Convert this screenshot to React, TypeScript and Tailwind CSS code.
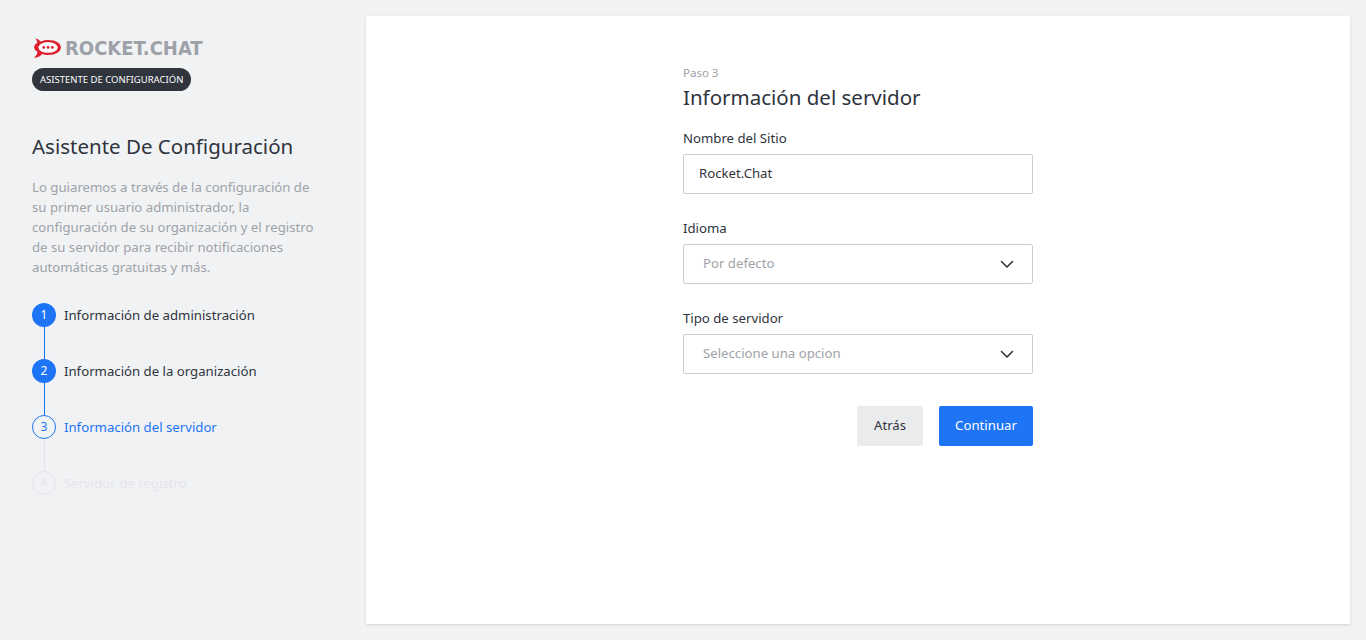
import React from "react";

const Chevron = () => (
  <svg width="16" height="16" viewBox="0 0 16 16" fill="none" stroke="#2f343d" strokeWidth="1.6" strokeLinecap="round" strokeLinejoin="round"><path d="M2.5 5.5 8 11l5.5-5.5" /></svg>
);

export default function App() {
  const steps = [
    { n: 1, t: "Información de administración", s: "done" },
    { n: 2, t: "Información de la organización", s: "done" },
    { n: 3, t: "Información del servidor", s: "cur" },
    { n: 4, t: "Servidor de registro", s: "todo" },
  ];
  return (
    <div className="w-[1366px] h-[640px] bg-[#f1f2f4] flex" style={{ fontFamily: '"Noto Sans", sans-serif' }}>
      <div className="w-[366px] shrink-0 pl-[32px] pr-[40px] pt-[35px]">
        <div className="flex items-center gap-[3px] h-[26px]">
          <svg width="30" height="24" viewBox="0 0 28 22">
            <path d="M3 2 C6 3 7 4 8 5 C10 4 12 3.5 15 3.5 C22 3.5 27 6.5 27 10.5 C27 14.5 22 17.5 15 17.5 C13 17.5 11 17 9.5 16.5 C8 18.5 5 20 2 20 C4 18 5 16.5 5 14.5 C3 13 2 12 2 10.5 C2 8.5 3 7 5 6 C4.5 4.5 4 3 3 2 Z" fill="#e01f2e" />
            <ellipse cx="15" cy="10.5" rx="9" ry="5" fill="#fff" />
            <circle cx="11" cy="10.5" r="1.3" fill="#e01f2e" /><circle cx="15" cy="10.5" r="1.3" fill="#e01f2e" /><circle cx="19" cy="10.5" r="1.3" fill="#e01f2e" />
          </svg>
          <span className="text-[20px] font-bold text-[#9ea2a8]" style={{ fontFamily: '"Liberation Sans Narrow", "DejaVu Sans Condensed", sans-serif' }}>ROCKET.CHAT</span>
        </div>
        <div className="mt-[7px] inline-block bg-[#2f343d] text-white text-[9.5px] rounded-full px-[8px] py-[4px] leading-[15px]">ASISTENTE DE CONFIGURACIÓN</div>
        <h1 className="mt-[40px] text-[20.5px] text-[#2f343d] leading-[30px]">Asistente De Configuración</h1>
        <p className="mt-[16px] text-[13.2px] leading-[20px] text-[#9ea2a8]">Lo guiaremos a través de la configuración de su primer usuario administrador, la configuración de su organización y el registro de su servidor para recibir notificaciones automáticas gratuitas y más.</p>
        <div className="mt-[26px] flex flex-col">
          {steps.map((st, i) => (
            <div key={st.n} className="flex gap-[8px]">
              <div className="flex flex-col items-center w-[24px]">
                <div className={
                  st.s === "done" ? "w-[24px] h-[24px] rounded-full bg-[#1d74f5] text-white text-[12px] flex items-center justify-center" :
                  st.s === "cur" ? "w-[24px] h-[24px] rounded-full border border-[#1d74f5] text-[#1d74f5] text-[12px] flex items-center justify-center" :
                  "w-[24px] h-[24px] rounded-full border border-[#e4e6e9] text-[#e4e6e9] text-[12px] flex items-center justify-center"}>{st.n}</div>
                {i < 3 && <div className={`w-px h-[32px] ${st.s === "done" ? "bg-[#1d74f5]" : "bg-[#e4e6e9]"}`} />}
              </div>
              <div className={`text-[13.2px] leading-[24px] ${st.s === "done" ? "text-[#2f343d]" : st.s === "cur" ? "text-[#1d74f5]" : "text-[#e4e6e9]"}`}>{st.t}</div>
            </div>
          ))}
        </div>
      </div>
      <div className="mt-[16px] mb-[16px] mr-[16px] flex-1 bg-white shadow-sm flex justify-center">
        <div className="w-[350px] pt-[50px]">
          <div className="text-[11.5px] text-[#9ea2a8] leading-[14px]">Paso 3</div>
          <h2 className="text-[20.5px] text-[#2f343d] leading-[30px] mt-[2px]">Información del servidor</h2>
          <label className="block mt-[16px] text-[13.2px] text-[#2f343d] leading-[20px]">Nombre del Sitio</label>
          <div className="mt-[6px] h-[40px] border border-[#cbced1] rounded-[2px] px-[15px] flex items-center text-[13.2px] text-[#2f343d]">Rocket.Chat</div>
          <label className="block mt-[24px] text-[13.2px] text-[#2f343d] leading-[20px]">Idioma</label>
          <div className="mt-[6px] h-[40px] border border-[#cbced1] rounded-[2px] pl-[19px] pr-[17px] flex items-center justify-between text-[13.2px] text-[#9ea2a8]">Por defecto<Chevron /></div>
          <label className="block mt-[24px] text-[13.2px] text-[#2f343d] leading-[20px]">Tipo de servidor</label>
          <div className="mt-[6px] h-[40px] border border-[#cbced1] rounded-[2px] pl-[19px] pr-[17px] flex items-center justify-between text-[13.2px] text-[#9ea2a8]">Seleccione una opcion<Chevron /></div>
          <div className="mt-[32px] flex justify-end gap-[16px]">
            <button className="h-[40px] w-[66px] bg-[#eaebed] text-[#2f343d] text-[13.2px] rounded-[2px]">Atrás</button>
            <button className="h-[40px] w-[94px] bg-[#1d74f5] text-white text-[13.2px] rounded-[2px]">Continuar</button>
          </div>
        </div>
      </div>
    </div>
  );
}
